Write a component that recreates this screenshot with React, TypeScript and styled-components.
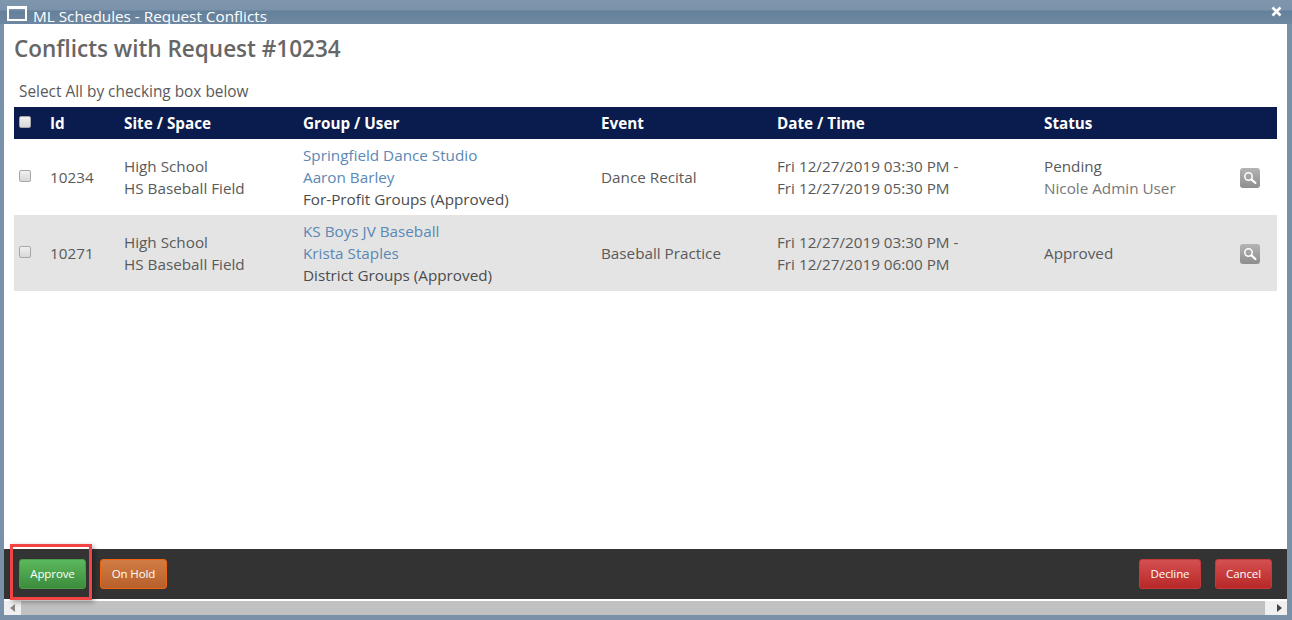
import React from "react";
import styled, { createGlobalStyle } from "styled-components";

const Global = createGlobalStyle`
  html, body { margin: 0; padding: 0; height: 620px; overflow: hidden; background: #7890a8; }
  #root { height: 620px; }
`;

const Frame = styled.div`
  position: relative;
  width: 1292px;
  height: 620px;
  display: flex;
  flex-direction: column;
  background: #7890a8;
  font-family: "Open Sans", "Noto Sans", sans-serif;
  color: #555;
`;

const TitleBar = styled.div`
  height: 24px;
  flex: none;
  display: flex;
  align-items: flex-start;
  padding-left: 7px;
  background: linear-gradient(to bottom, #7f97ad 0, #7a93aa 10px, #64809a 11px, #6f88a1 24px);
`;

const WindowIcon = styled.div`
  box-sizing: border-box;
  width: 20px;
  height: 15px;
  margin-top: 6px;
  border: 2px solid #fff;
  border-top-width: 3px;
  flex: none;
`;

const TitleText = styled.div`
  margin-left: 6px;
  margin-top: 6px;
  font-size: 15.3px;
  line-height: 20px;
  color: #fff;
  white-space: nowrap;
`;

const CloseButton = styled.svg`
  margin-left: auto;
  margin-right: 10px;
  margin-top: 6px;
  width: 11px;
  height: 11px;
  flex: none;
`;

const Panel = styled.div`
  margin: 0 5px 0 4px;
  background: #fff;
  flex: 1;
  display: flex;
  flex-direction: column;
  min-height: 0;
`;

const Content = styled.div`
  flex: 1;
  padding: 0 10px;
  min-height: 0;
`;

const Heading = styled.h1`
  margin: 0;
  padding-top: 10px;
  font-size: 22.5px;
  line-height: 30px;
  font-weight: 600;
  color: #666;
`;

const SelectHint = styled.div`
  margin-top: 18px;
  padding-left: 5px;
  font-size: 15.4px;
  line-height: 20px;
  height: 25px;
  color: #5a5a5a;
`;

const Row = styled.div<{ $head?: boolean; $alt?: boolean }>`
  display: grid;
  grid-template-columns: 36px 74px 179px 298px 176px 267px 196px 37px;
  align-items: center;
  height: ${(p) => (p.$head ? 32 : 76)}px;
  background: ${(p) => (p.$head ? "#0a1c4d" : p.$alt ? "#e4e4e4" : "#fff")};
  color: ${(p) => (p.$head ? "#fff" : "#5a5a5a")};
  font-size: 15.25px;
  line-height: 22px;
  font-weight: ${(p) => (p.$head ? 700 : 400)};
`;

const Cell = styled.div`
  white-space: nowrap;
`;

const Box = styled.span`
  display: block;
  box-sizing: border-box;
  width: 12px;
  height: 12px;
  margin-left: 5px;
  margin-top: -2px;
  border: 1px solid #a8a8a8;
  border-radius: 2px;
  background: linear-gradient(to bottom, #f0f0f0, #d8d8d8);
`;

const UserLink = styled.a`
  display: block;
  color: #5b88b5;
  text-decoration: none;
`;

const GroupType = styled.div`
  color: #4c4c4c;
`;

const Muted = styled.div`
  color: #777;
`;

const SearchButton = styled.div`
  width: 20px;
  height: 20px;
  margin-top: 2px;
  border-radius: 3px;
  background: linear-gradient(to bottom, #b4b4b4, #8e8e8e);
  display: flex;
  align-items: center;
  justify-content: center;
`;

const Footer = styled.div`
  flex: none;
  height: 50px;
  box-sizing: border-box;
  background: #333;
  display: flex;
  align-items: center;
  padding: 0 15px;
  gap: 14px;
`;

const Spacer = styled.div`
  flex: 1;
`;

const colors = {
  green: ["#5cb85c", "#3c8c3c", "#4a9a4a"],
  orange: ["#d07c44", "#b8602c", "#f0640f"],
  red: ["#d45050", "#b82828", "#c43a3a"],
};

const ActionButton = styled.button<{ $tone: "green" | "orange" | "red"; $w: number }>`
  width: ${(p) => p.$w}px;
  height: 30px;
  box-sizing: border-box;
  padding: 0 0 2px;
  border-radius: 3px;
  border: 1px solid ${(p) => colors[p.$tone][2]};
  background: linear-gradient(to bottom, ${(p) => colors[p.$tone][0]}, ${(p) => colors[p.$tone][1]});
  color: #fff;
  font-family: "Open Sans", "Noto Sans", sans-serif;
  font-size: 11.5px;
  letter-spacing: -0.1px;
`;

const ScrollBar = styled.div`
  flex: none;
  height: 16px;
  box-sizing: border-box;
  border-top: 2px solid #fff;
  background: #f0f0f0;
  display: flex;
  align-items: center;
  padding: 0 0 0 6px;
`;

const ScrollThumb = styled.div`
  height: 14px;
  margin-left: 5px;
  width: 1244px;
  background: #c1c1c1;
`;

const ScrollArrow = styled.svg`
  width: 6px;
  height: 8px;
  flex: none;
`;

const ArrowRightWrap = styled.div`
  margin-left: 12px;
  display: flex;
`;

const BottomEdge = styled.div`
  height: 5px;
  flex: none;
`;

const Highlight = styled.div`
  position: absolute;
  left: 10px;
  top: 544px;
  width: 82px;
  height: 56px;
  box-sizing: border-box;
  border: 3px solid #f24444;
  box-shadow: 2px 2px 5px rgba(0, 0, 0, 0.35);
  pointer-events: none;
`;

function Search() {
  return (
    <SearchButton>
      <svg width="14" height="14" viewBox="0 0 14 14" fill="none" stroke="#fff">
        <circle cx="5.5" cy="5.5" r="3.7" strokeWidth="1.5" />
        <path d="M8.4 8.4 12.4 12" strokeWidth="2.2" strokeLinecap="round" />
      </svg>
    </SearchButton>
  );
}

const rows = [
  {
    id: "10234",
    group: "Springfield Dance Studio",
    user: "Aaron Barley",
    type: "For-Profit Groups (Approved)",
    event: "Dance Recital",
    end: "Fri 12/27/2019 05:30 PM",
    status: "Pending",
    by: "Nicole Admin User",
  },
  {
    id: "10271",
    group: "KS Boys JV Baseball",
    user: "Krista Staples",
    type: "District Groups (Approved)",
    event: "Baseball Practice",
    end: "Fri 12/27/2019 06:00 PM",
    status: "Approved",
    by: "",
  },
];

export default function App() {
  return (
    <Frame>
      <Global />
      <TitleBar>
        <WindowIcon />
        <TitleText>ML Schedules - Request Conflicts</TitleText>
        <CloseButton viewBox="0 0 11 11">
          <path d="M1.5 1.5 9.5 9.5M9.5 1.5 1.5 9.5" stroke="#fff" strokeWidth="2.6" />
        </CloseButton>
      </TitleBar>
      <Panel>
        <Content>
          <Heading>Conflicts with Request #10234</Heading>
          <SelectHint>Select All by checking box below</SelectHint>
          <Row $head>
            <Cell><Box /></Cell>
            <Cell>Id</Cell>
            <Cell>Site / Space</Cell>
            <Cell>Group / User</Cell>
            <Cell>Event</Cell>
            <Cell>Date / Time</Cell>
            <Cell>Status</Cell>
            <Cell />
          </Row>
          {rows.map((r, i) => (
            <Row key={r.id} $alt={i === 1}>
              <Cell><Box /></Cell>
              <Cell>{r.id}</Cell>
              <Cell>
                <div>High School</div>
                <div>HS Baseball Field</div>
              </Cell>
              <Cell>
                <UserLink>{r.group}</UserLink>
                <UserLink>{r.user}</UserLink>
                <GroupType>{r.type}</GroupType>
              </Cell>
              <Cell>{r.event}</Cell>
              <Cell>
                <div>Fri 12/27/2019 03:30 PM -</div>
                <div>{r.end}</div>
              </Cell>
              <Cell>
                <div>{r.status}</div>
                {r.by && <Muted>{r.by}</Muted>}
              </Cell>
              <Cell><Search /></Cell>
            </Row>
          ))}
        </Content>
        <Footer>
          <ActionButton $tone="green" $w={67}>Approve</ActionButton>
          <ActionButton $tone="orange" $w={67}>On Hold</ActionButton>
          <Spacer />
          <ActionButton $tone="red" $w={62}>Decline</ActionButton>
          <ActionButton $tone="red" $w={57}>Cancel</ActionButton>
        </Footer>
        <ScrollBar>
          <ScrollArrow viewBox="0 0 6 8"><path d="M5 0V8L0 4Z" fill="#888" /></ScrollArrow>
          <ScrollThumb />
          <ArrowRightWrap>
            <ScrollArrow viewBox="0 0 6 8"><path d="M0 0V8L5 4Z" fill="#444" /></ScrollArrow>
          </ArrowRightWrap>
        </ScrollBar>
      </Panel>
      <BottomEdge />
      <Highlight />
    </Frame>
  );
}
